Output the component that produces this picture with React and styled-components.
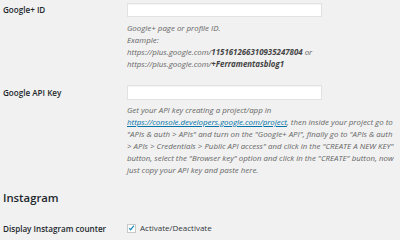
import React from "react";
import styled, { createGlobalStyle } from "styled-components";

const Global = createGlobalStyle`
  html, body { margin: 0; padding: 0; background: #f1f1f1; }
  body { font-family: "Open Sans", "Noto Sans", sans-serif; color: #23282d; overflow: hidden; }
`;

const Page = styled.div`
  width: 400px;
  height: 240px;
  padding: 3px 0 0 3px;
  box-sizing: border-box;
  background: #f1f1f1;
`;

const FormTable = styled.div`
  display: grid;
  grid-template-columns: 124px 269px;
  row-gap: ${p => p.$gap || 0}px;
`;

const Label = styled.div`
  font-size: 8.1px;
  font-weight: 600;
  line-height: 12px;
  color: #23282d;
  padding-top: ${p => p.$pt ?? 1}px;
  white-space: nowrap;
`;

const Field = styled.div`
  display: flex;
  flex-direction: column;
  align-items: flex-start;
`;

const TextInput = styled.div`
  width: 195px;
  height: ${p => p.$h || 14}px;
  box-sizing: border-box;
  background: #fff;
  border: 1px solid #e2e2e2;
  box-shadow: inset 0 1px 1px rgba(0,0,0,0.04);
`;

const Description = styled.p`
  margin: ${p => p.$mt || 4}px 0 0;
  font-size: 7.9px;
  line-height: 12px;
  font-style: italic;
  color: #666;
  strong { color: #444; font-weight: 700; }
  a { color: #0073aa; text-decoration: underline; }
`;

const Heading = styled.h2`
  margin: 15px 0 17px;
  font-size: 11.3px;
  font-weight: 600;
  line-height: 14px;
  color: #23282d;
`;

const CheckRow = styled.label`
  display: flex;
  align-items: center;
  gap: 4px;
  font-size: 8px;
  line-height: 12px;
  color: #32373c;
`;

const Box = styled.span`
  width: 9px;
  height: 9px;
  box-sizing: border-box;
  background: #fff;
  border: 1px solid #c8c8c8;
  display: flex;
  align-items: center;
  justify-content: center;
`;

export default function App() {
  return (
    <>
      <Global />
      <Page>
        <FormTable $gap={15}>
          <Label>Google+ ID</Label>
          <Field>
            <TextInput />
            <Description $mt={5}>
              Google+ page or profile ID.<br />
              Example:<br />
              https://plus.google.com/<strong>115161266310935247804</strong> or<br />
              https://plus.google.com/<strong>+Ferramentasblog1</strong>
            </Description>
          </Field>
          <Label $pt={2}>Google API Key</Label>
          <Field>
            <TextInput $h={15} />
            <Description $mt={4}>
              Get your API key creating a project/app in{" "}
              <a href="#">https://console.developers.google.com/project</a>, then inside your project go to
              "APIs &amp; auth &gt; APIs" and turn on the "Google+ API", finally go to "APIs &amp; auth
              &gt; APIs &gt; Credentials &gt; Public API access" and click in the "CREATE A NEW KEY"
              button, select the "Browser key" option and click in the "CREATE" button, now
              just copy your API key and paste here.
            </Description>
          </Field>
        </FormTable>
        <Heading>Instagram</Heading>
        <FormTable>
          <Label>Display Instagram counter</Label>
          <Field>
            <CheckRow>
              <Box>
                <svg width="8" height="8" viewBox="0 0 8 8">
                  <path d="M1.3 4.2 L3 6 L6.8 1.3" fill="none" stroke="#1e8cbe" strokeWidth="1.4" />
                </svg>
              </Box>
              Activate/Deactivate
            </CheckRow>
          </Field>
        </FormTable>
      </Page>
    </>
  );
}
